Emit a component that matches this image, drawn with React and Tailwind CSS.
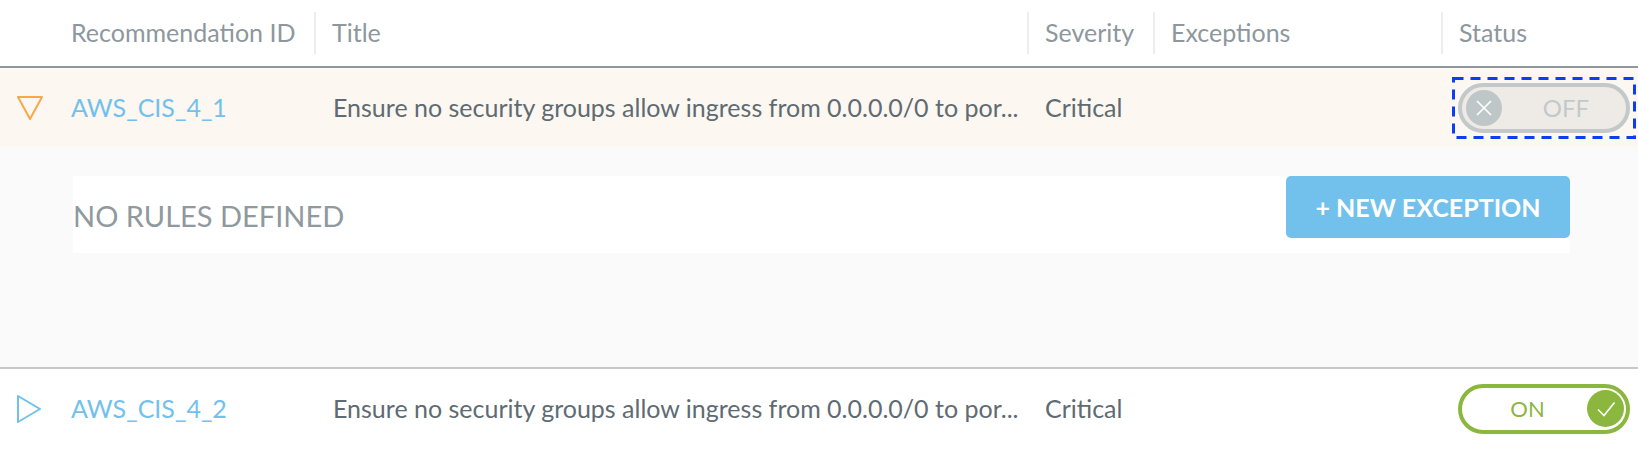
const cols = "grid grid-cols-[71px_243px_713px_126px_288px_197px]";

const HeaderCell = ({ label, sep = true }) => (
    <div className="pt-[12px]">
        <div className={`h-[42px] flex items-center ${sep ? "border-l-2 border-[#ededed] pl-[16px]" : ""}`}>
            {label}
        </div>
    </div>
);

const DownArrow = () => (
    <svg width="28" height="26" viewBox="0 0 28 26">
        <path d="M2 2 L26 2 L14 24 Z" fill="none" stroke="#f6a945" strokeWidth="2" strokeLinejoin="round" />
    </svg>
);

const RightArrow = () => (
    <svg width="26" height="30" viewBox="0 0 26 30">
        <path d="M2 2 L24 15 L2 28 Z" fill="none" stroke="#72c1ed" strokeWidth="2" strokeLinejoin="round" />
    </svg>
);

const Toggle = ({ on, focused }) => (
    <div className="relative p-[6px]">
        {focused && (
            <svg className="absolute inset-0 pointer-events-none" width="184" height="62" viewBox="0 0 184 62">
                <rect x="1.5" y="1.5" width="181" height="59" fill="none" stroke="#0b3df2" strokeWidth="3" strokeDasharray="10 7" />
            </svg>
        )}
        {on ? (
            <div className="w-[172px] h-[50px] rounded-full border-4 border-[#8cb73f] bg-white flex items-center pr-[2px]">
                <span className="flex-1 text-center text-[22px] text-[#8cb73f] pl-[6px]">ON</span>
                <div className="w-[37px] h-[37px] rounded-full bg-[#8cb73f] flex items-center justify-center">
                    <svg width="22" height="22" viewBox="0 0 22 22">
                        <path d="M3 11.5 L9 17.5 L19.5 4.5" fill="none" stroke="white" strokeWidth="1.6" />
                    </svg>
                </div>
            </div>
        ) : (
            <div className="w-[172px] h-[50px] rounded-full border-4 border-[#c3c9cb] bg-[#eeebe6] flex items-center pl-[4px]">
                <div className="w-[36px] h-[36px] rounded-full bg-[#bfc6c8] flex items-center justify-center">
                    <svg width="22" height="22" viewBox="0 0 22 22">
                        <path d="M4 4 L18 18 M18 4 L4 18" fill="none" stroke="white" strokeWidth="1.6" />
                    </svg>
                </div>
                <span className="flex-1 text-center text-[24px] text-[#c3c9cb] pl-[4px]">OFF</span>
            </div>
        )}
    </div>
);

const Row = ({ id, expanded, on }) => (
    <div className={`${cols} h-[79px] items-center ${expanded ? "bg-[#fcf7f0]" : "bg-white"}`}>
        <div className="pl-[16px] flex items-center">{expanded ? <DownArrow /> : <RightArrow />}</div>
        <div className="text-[#72c1ed]">{id}</div>
        <div className="pl-[19px] text-[#5f6b72] whitespace-nowrap overflow-hidden">
            Ensure no security groups allow ingress from 0.0.0.0/0 to por...
        </div>
        <div className="pl-[18px] text-[#5f6b72]">Critical</div>
        <div></div>
        <div className="pl-[11px] flex items-center">
            <Toggle on={on} focused={expanded} />
        </div>
    </div>
);

export default function App() {
    return (
        <div className="w-[1638px] h-[450px] bg-white overflow-hidden text-[25px] font-['Lato',sans-serif]">
            {/* Header */}
            <div className={`${cols} h-[68px] text-[#8d979d] border-b-2 border-[#8e999f]`}>
                <div></div>
                <HeaderCell label="Recommendation ID" sep={false} />
                <HeaderCell label="Title" />
                <HeaderCell label="Severity" />
                <HeaderCell label="Exceptions" />
                <HeaderCell label="Status" />
            </div>

            <Row id="AWS_CIS_4_1" expanded on={false} />

            {/* Exceptions panel */}
            <div className="h-[222px] bg-[#fafafa] border-b-2 border-[#c4c8ca] pt-[29px] pl-[73px] pr-[68px]">
                <div className="h-[77px] bg-white flex items-start justify-between">
                    <span className="self-center pt-[3px] text-[29px] text-[#8f999e]">NO RULES DEFINED</span>
                    <button className="w-[284px] h-[62px] rounded-[5px] bg-[#72c1ed] text-white text-[25px] font-bold pt-[2px]">
                        + NEW EXCEPTION
                    </button>
                </div>
            </div>

            <Row id="AWS_CIS_4_2" on />
        </div>
    );
}
